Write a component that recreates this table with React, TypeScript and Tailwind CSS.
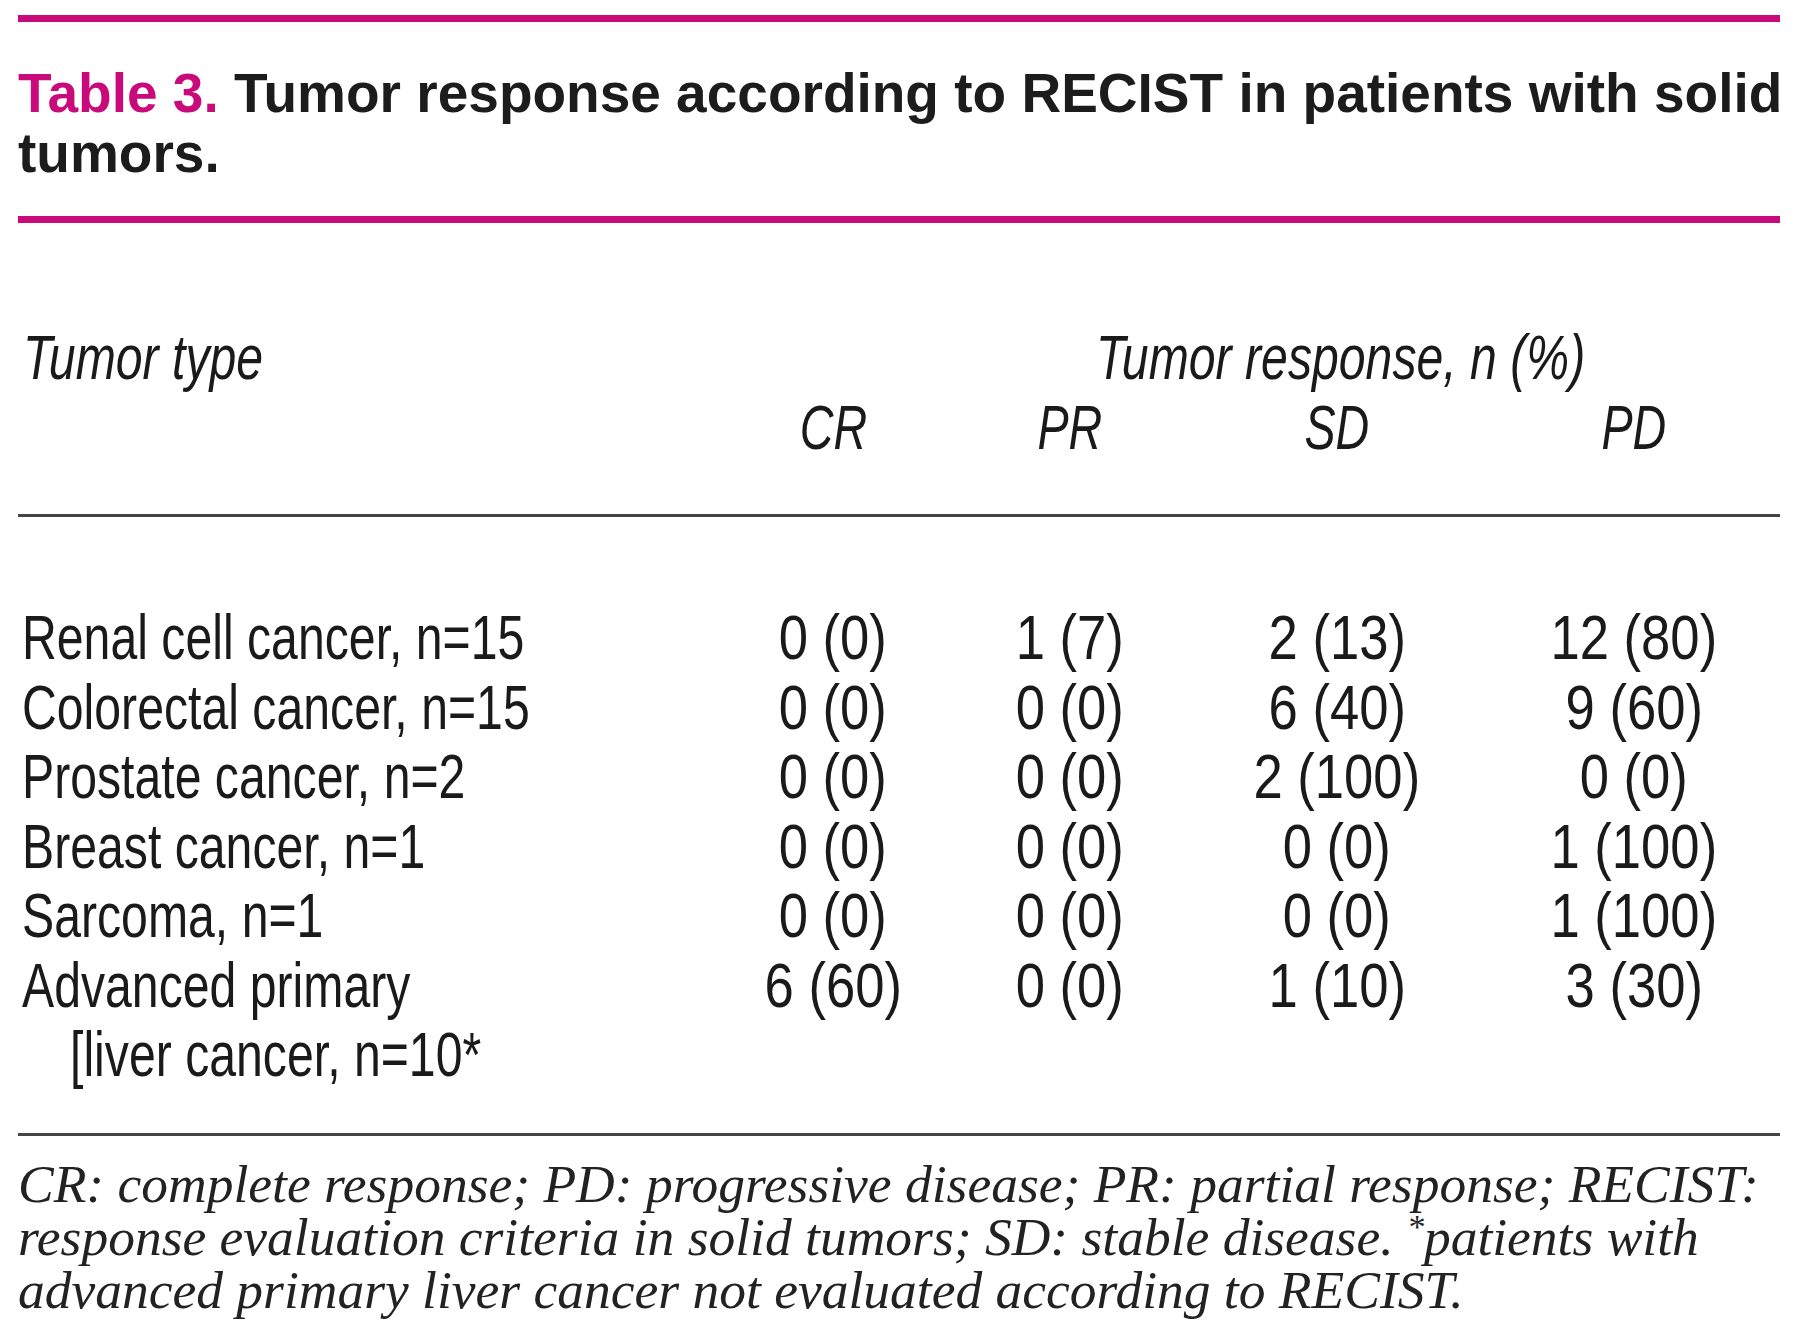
import React from 'react';

const rows = [
  { label: 'Renal cell cancer, n=15', cr: '0 (0)', pr: '1 (7)', sd: '2 (13)', pd: '12 (80)' },
  { label: 'Colorectal cancer, n=15', cr: '0 (0)', pr: '0 (0)', sd: '6 (40)', pd: '9 (60)' },
  { label: 'Prostate cancer, n=2', cr: '0 (0)', pr: '0 (0)', sd: '2 (100)', pd: '0 (0)' },
  { label: 'Breast cancer, n=1', cr: '0 (0)', pr: '0 (0)', sd: '0 (0)', pd: '1 (100)' },
  { label: 'Sarcoma, n=1', cr: '0 (0)', pr: '0 (0)', sd: '0 (0)', pd: '1 (100)' },
];

const grid = 'grid grid-cols-[702px_226px_248px_286px_308px]';

// the source uses a condensed gothic face; squeeze Liberation Sans to its width
const Label = ({ children }: { children: React.ReactNode }) => (
  <span className="inline-block whitespace-nowrap scale-x-[0.765] origin-left">{children}</span>
);

const Num = ({ children }: { children: React.ReactNode }) => (
  <div className="text-center">
    <span className="inline-block whitespace-nowrap scale-x-[0.835] origin-center">{children}</span>
  </div>
);

const Head = ({ children }: { children: React.ReactNode }) => (
  <div className="text-center">
    <span className="inline-block whitespace-nowrap scale-x-[0.74] origin-center">{children}</span>
  </div>
);

export default function App() {
  return (
    <div className="w-[1800px] h-[1334px] bg-white px-[18px] pt-[15px] text-[#1a1a1a] overflow-hidden">
      {/* title block */}
      <div className="w-[1762px] h-[7px] bg-[#c90a7b]" />
      <h1 className="mt-[41px] w-[1775px] font-['Liberation_Sans',Arial,sans-serif] font-bold text-[55px] leading-[60px] text-[#1c1c1c]">
        <span className="text-[#c90a7b]">Table 3.</span> Tumor response according to RECIST in patients with solid tumors.
      </h1>
      <div className="mt-[33px] w-[1762px] h-[7px] bg-[#c90a7b]" />

      {/* table */}
      <div className="font-['Liberation_Sans',Arial,sans-serif] text-[63px] leading-[69.5px]">
        <div className={`${grid} mt-[100px] italic`}>
          <div className="pl-[5px]">
            <Label>Tumor type</Label>
          </div>
          <div className="col-span-4 pl-[376px]">
            <Label>Tumor response, n (%)</Label>
          </div>
          <div />
          <Head>CR</Head>
          <Head>PR</Head>
          <Head>SD</Head>
          <Head>PD</Head>
        </div>
        <div className="mt-[52px] w-[1762px] h-[3px] bg-[#444]" />

        <div className={`${grid} mt-[86px]`}>
          {rows.map((r) => (
            <React.Fragment key={r.label}>
              <div className="pl-[4px]">
                <Label>{r.label}</Label>
              </div>
              <Num>{r.cr}</Num>
              <Num>{r.pr}</Num>
              <Num>{r.sd}</Num>
              <Num>{r.pd}</Num>
            </React.Fragment>
          ))}
          <div className="pl-[4px]">
            <div>
              <Label>Advanced primary</Label>
            </div>
            <div className="pl-[48px]">
              <Label>[liver cancer, n=10*</Label>
            </div>
          </div>
          <Num>6 (60)</Num>
          <Num>0 (0)</Num>
          <Num>1 (10)</Num>
          <Num>3 (30)</Num>
        </div>
        <div className="mt-[43px] w-[1762px] h-[3px] bg-[#444]" />
      </div>

      {/* footnote */}
      <p className="mt-[22px] w-[1770px] font-['Liberation_Serif','Times_New_Roman',serif] italic text-[53.5px] leading-[53px] text-[#222]">
        CR: complete response; PD: progressive disease; PR: partial response; RECIST: response evaluation criteria in solid tumors; SD: stable disease. <sup className="text-[34px]">*</sup>patients with advanced primary liver cancer not evaluated according to RECIST.
      </p>
    </div>
  );
}
